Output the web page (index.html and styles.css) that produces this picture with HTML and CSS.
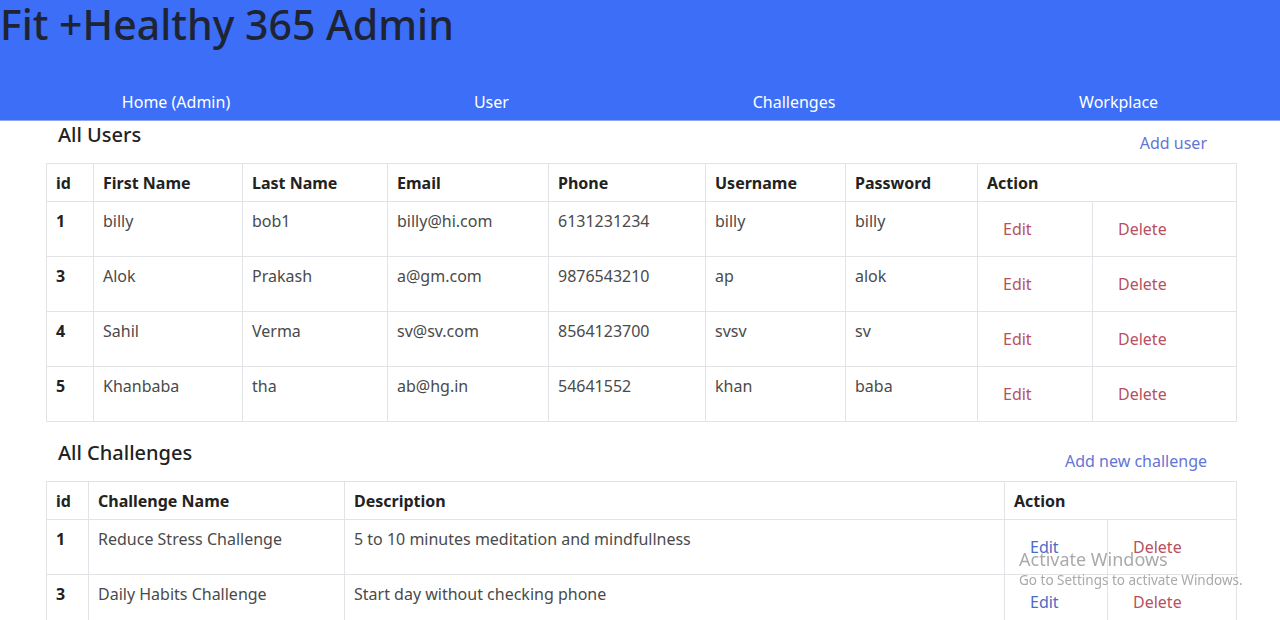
FILE: index.html
```html
<!DOCTYPE html>
<html lang="en">
<head>
    <meta charset="UTF-8">
    <title>Fit +Healthy 365 Admin</title>
    <link rel="stylesheet" href="styles.css">
</head>
<body>
    <header class="topbar">
        <h1 class="brand">Fit +Healthy 365 Admin</h1>
        <nav class="menu">
            <a href="#">Home (Admin)</a>
            <a href="#">User</a>
            <a href="#">Challenges</a>
            <a href="#">Workplace</a>
        </nav>
    </header>

    <main class="content">
        <section class="panel">
            <div class="panel-head">
                <h4>All Users</h4>
                <a href="#" class="add-link">Add user</a>
            </div>
            <table class="grid users">
                <colgroup>
                    <col class="c-id">
                    <col class="c-first">
                    <col class="c-last">
                    <col class="c-email">
                    <col class="c-phone">
                    <col class="c-user">
                    <col class="c-pass">
                    <col class="c-edit">
                    <col class="c-del">
                </colgroup>
                <thead>
                    <tr>
                        <th>id</th>
                        <th>First Name</th>
                        <th>Last Name</th>
                        <th>Email</th>
                        <th>Phone</th>
                        <th>Username</th>
                        <th>Password</th>
                        <th colspan="2">Action</th>
                    </tr>
                </thead>
                <tbody>
                    <tr>
                        <th>1</th><td>billy</td><td>bob1</td><td>billy@hi.com</td><td>6131231234</td><td>billy</td><td>billy</td>
                        <td class="act"><button class="btn danger">Edit</button></td>
                        <td class="act"><button class="btn danger">Delete</button></td>
                    </tr>
                    <tr>
                        <th>3</th><td>Alok</td><td>Prakash</td><td>a@gm.com</td><td>9876543210</td><td>ap</td><td>alok</td>
                        <td class="act"><button class="btn danger">Edit</button></td>
                        <td class="act"><button class="btn danger">Delete</button></td>
                    </tr>
                    <tr>
                        <th>4</th><td>Sahil</td><td>Verma</td><td>sv@sv.com</td><td>8564123700</td><td>svsv</td><td>sv</td>
                        <td class="act"><button class="btn danger">Edit</button></td>
                        <td class="act"><button class="btn danger">Delete</button></td>
                    </tr>
                    <tr>
                        <th>5</th><td>Khanbaba</td><td>tha</td><td>ab@hg.in</td><td>54641552</td><td>khan</td><td>baba</td>
                        <td class="act"><button class="btn danger">Edit</button></td>
                        <td class="act"><button class="btn danger">Delete</button></td>
                    </tr>
                </tbody>
            </table>
        </section>

        <section class="panel">
            <div class="panel-head">
                <h4>All Challenges</h4>
                <a href="#" class="add-link">Add new challenge</a>
            </div>
            <table class="grid challenges">
                <colgroup>
                    <col class="c-id2">
                    <col class="c-name">
                    <col class="c-desc">
                    <col class="c-edit2">
                    <col class="c-del2">
                </colgroup>
                <thead>
                    <tr>
                        <th>id</th>
                        <th>Challenge Name</th>
                        <th>Description</th>
                        <th colspan="2">Action</th>
                    </tr>
                </thead>
                <tbody>
                    <tr>
                        <th>1</th><td>Reduce Stress Challenge</td><td>5 to 10 minutes meditation and mindfullness</td>
                        <td class="act"><button class="btn primary">Edit</button></td>
                        <td class="act"><button class="btn danger">Delete</button></td>
                    </tr>
                    <tr>
                        <th>3</th><td>Daily Habits Challenge</td><td>Start day without checking phone</td>
                        <td class="act"><button class="btn primary">Edit</button></td>
                        <td class="act"><button class="btn danger">Delete</button></td>
                    </tr>
                </tbody>
            </table>
        </section>
    </main>

    <div class="watermark">
        <div class="wm-title">Activate Windows</div>
        <div class="wm-sub">Go to Settings to activate Windows.</div>
    </div>
</body>
</html>
```

FILE: styles.css
```css
body {
    font-family: 'Noto Sans', 'Open Sans', sans-serif;
    margin: 0;
    padding: 0;
    background-color: #fff;
    color: #212529;
    font-size: 16px;
    line-height: 24px;
    overflow: hidden;
}

.topbar {
    background: #3d6ef7;
    height: 121px;
    display: flex;
    flex-direction: column;
    justify-content: space-between;
    border-bottom: 1px solid #8aa6f5;
    box-sizing: border-box;
}

.brand {
    margin: 0;
    font-size: 41px;
    font-weight: 500;
    line-height: 48px;
    color: #1e2433;
}

.menu {
    display: flex;
    justify-content: space-around;
    padding-bottom: 6px;
}

.menu a {
    color: #fff;
    text-decoration: none;
}

.content {
    margin: 0 44px 0 46px;
}

.panel + .panel {
    margin-top: 17px;
}

.panel-head {
    display: flex;
    justify-content: space-between;
    align-items: flex-start;
    padding: 2px 29px 8px 12px;
}

.panel-head h4 {
    margin: 0;
    font-size: 20px;
    font-weight: 500;
    line-height: 24px;
    color: #222;
}

.add-link {
    margin-top: 8px;
    color: #6475d6;
    text-decoration: none;
}

.grid {
    width: 100%;
    border-collapse: collapse;
    table-layout: fixed;
}

.grid th,
.grid td {
    border: 1px solid #e2e3e6;
    padding: 7px 9px;
    text-align: left;
    vertical-align: top;
}

.grid thead th {
    padding: 7px 9px 6px;
}

.grid th {
    font-weight: 700;
    color: #222;
}

.grid td {
    color: #4a4a4a;
}

.btn {
    font: inherit;
    background: none;
    border: none;
    padding: 8px 16px;
    cursor: pointer;
}

.btn.danger {
    color: #b8505f;
}

.btn.primary {
    color: #4a6cc8;
}

.c-id { width: 47px; }
.c-first { width: 149px; }
.c-last { width: 145px; }
.c-email { width: 161px; }
.c-phone { width: 157px; }
.c-user { width: 140px; }
.c-pass { width: 132px; }
.c-edit { width: 115px; }
.c-del { width: 144px; }

.c-id2 { width: 42px; }
.c-name { width: 256px; }
.c-desc { width: 660px; }
.c-edit2 { width: 103px; }
.c-del2 { width: 129px; }

.watermark {
    position: fixed;
    left: 1019px;
    top: 547px;
    color: rgba(140, 140, 140, 0.75);
    pointer-events: none;
}

.wm-title {
    font-size: 18px;
    line-height: 24px;
}

.wm-sub {
    font-size: 13.5px;
    line-height: 18px;
}
```
